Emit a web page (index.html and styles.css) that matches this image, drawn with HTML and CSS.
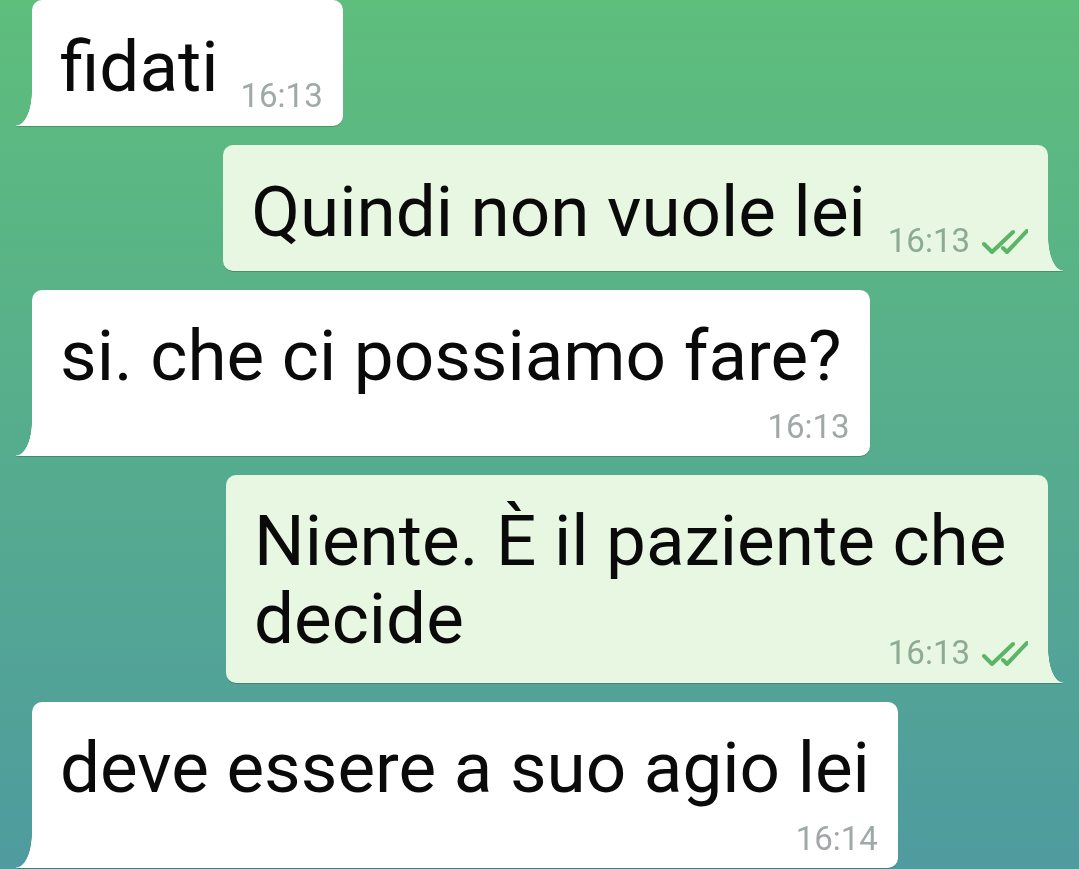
FILE: index.html
```html
<!DOCTYPE html>
<html lang="it">
<head>
<meta charset="utf-8">
<title>Chat</title>
<link rel="stylesheet" href="styles.css">
</head>
<body>
<div class="chat">
  <div class="row in">
    <div class="bubble in-bubble inline">
      <div class="text">fidati</div>
      <div class="meta"><span class="time">16:13</span></div>
    </div>
  </div>
  <div class="row out">
    <div class="bubble out-bubble inline">
      <div class="text">Quindi non vuole lei</div>
      <div class="meta"><span class="time">16:13</span><svg class="checks" viewBox="0 0 46 26" width="46" height="26"><path d="M2 15 L10 23 L31 3 M21 19 L25 23 L45 2" fill="none" stroke="#5cb566" stroke-width="4" stroke-linecap="round" stroke-linejoin="round"/></svg></div>
    </div>
  </div>
  <div class="row in">
    <div class="bubble in-bubble block">
      <div class="text">si. che ci possiamo fare?</div>
      <div class="meta"><span class="time">16:13</span></div>
    </div>
  </div>
  <div class="row out">
    <div class="bubble out-bubble flow">
      <div class="text">Niente. È il paziente che decide<span class="meta meta-float"><span class="time">16:13</span><svg class="checks" viewBox="0 0 46 26" width="46" height="26"><path d="M2 15 L10 23 L31 3 M21 19 L25 23 L45 2" fill="none" stroke="#5cb566" stroke-width="4" stroke-linecap="round" stroke-linejoin="round"/></svg></span></div>
    </div>
  </div>
  <div class="row in">
    <div class="bubble in-bubble block">
      <div class="text">deve essere a suo agio lei</div>
      <div class="meta"><span class="time">16:14</span></div>
    </div>
  </div>
</div>
</body>
</html>
```
FILE: styles.css
```css
html, body {
  margin: 0;
  padding: 0;
  height: 100%;
}
body {
  background: linear-gradient(to bottom, #5ebe7c 0%, #56ad8d 50%, #4f9b9f 100%);
  font-family: Roboto, "Noto Sans", "Liberation Sans", sans-serif;
  overflow: hidden;
}
.chat {
  display: flex;
  flex-direction: column;
  gap: 19px;
  padding: 0 31px 0 32px;
}
.row {
  display: flex;
}
.row.in { justify-content: flex-start; }
.row.out { justify-content: flex-end; }

.bubble {
  position: relative;
  box-sizing: border-box;
  padding: 28px 20px 10px 28px;
  border-radius: 10px;
  filter: drop-shadow(0 1.5px 0.6px rgba(0, 0, 0, 0.2));
}
.in-bubble {
  background: #ffffff;
  border-bottom-left-radius: 0;
  max-width: 880px;
}
.out-bubble {
  background: #e7f7e2;
  border-bottom-right-radius: 0;
  max-width: 822px;
}
.in-bubble::before {
  content: "";
  position: absolute;
  left: -16px;
  bottom: 0;
  width: 16px;
  height: 34px;
  background: radial-gradient(ellipse 16px 34px at 0 0, transparent 97%, #ffffff 100%);
}
.out-bubble::before {
  content: "";
  position: absolute;
  right: -15px;
  bottom: 0;
  width: 15px;
  height: 34px;
  background: radial-gradient(ellipse 15px 34px at 100% 0, transparent 97%, #e7f7e2 100%);
}

.text {
  font-size: 71px;
  line-height: 78px;
  color: #0a0a0a;
}
.meta {
  display: flex;
  align-items: center;
  justify-content: flex-end;
  gap: 12px;
  font-size: 33px;
  line-height: 40px;
  height: 40px;
}
.in-bubble .time { color: #a0a8a8; }
.out-bubble .time { color: #8caa94; }
.checks {
  display: block;
  margin-top: 2px;
}

.inline {
  display: flex;
  align-items: flex-end;
  gap: 22px;
  max-width: none;
}
.inline .text {
  margin-bottom: 10px;
  white-space: nowrap;
  flex-shrink: 0;
}
.block {
  padding-top: 27px;
  padding-bottom: 9px;
}
.block .text {
  margin-right: 8px;
}
.block .meta {
  margin-top: 12px;
}

.flow {
  padding-top: 27px;
}
.flow .text {
  display: flow-root;
  margin-right: 8px;
}
.meta-float {
  float: right;
  display: flex;
  margin-top: 53px;
  margin-right: -8px;
}
```
